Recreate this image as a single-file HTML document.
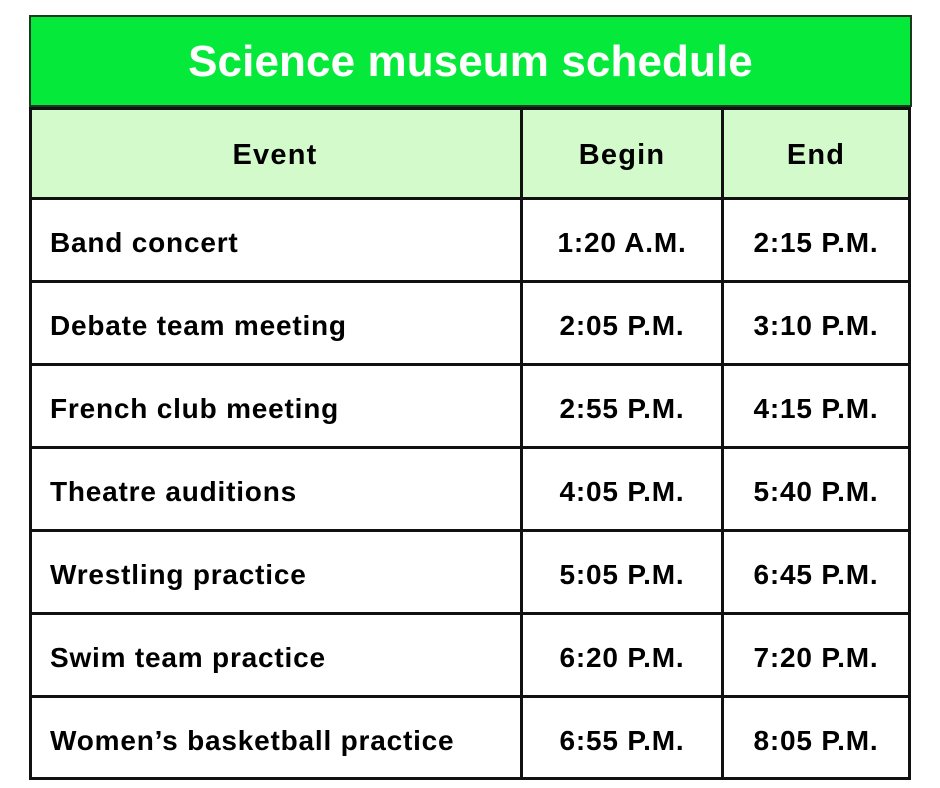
<!DOCTYPE html>
<html><head><meta charset="utf-8"><style>
body{margin:0;width:940px;height:788px;background:#fff;position:relative;overflow:hidden;font-family:"Liberation Sans",sans-serif;font-weight:bold;color:#000}
.t{position:absolute;left:29px;top:15px;width:879px;height:88px;background:#05ea3a;border:2px solid #1a3a1f;color:#fff;font-size:44px;text-align:center;line-height:90px;letter-spacing:0.1px}
.h{position:absolute;left:30px;top:109px;width:879px;height:89px;background:#d3facb}
.hl{position:absolute;background:#111;height:3px;left:29px;width:882px}
.vl{position:absolute;background:#111;width:3px;top:107px;height:673px}
.c{position:absolute;font-size:28px;line-height:83px;height:83px;letter-spacing:0.8px}
.hd{font-size:29px;letter-spacing:1.2px}
.ctr{text-align:center}
</style></head><body>
<div class="t">Science museum schedule</div>
<div class="h"></div>
<div class="hl" style="top:107px"></div>
<div class="hl" style="top:197px"></div>
<div class="hl" style="top:280px"></div>
<div class="hl" style="top:363px"></div>
<div class="hl" style="top:446px"></div>
<div class="hl" style="top:529px"></div>
<div class="hl" style="top:612px"></div>
<div class="hl" style="top:695px"></div>
<div class="hl" style="top:777px"></div>
<div class="vl" style="left:29px"></div>
<div class="vl" style="left:520px"></div>
<div class="vl" style="left:721px"></div>
<div class="vl" style="left:908px"></div>

<div class="c ctr hd" style="left:30px;width:490px;top:114px">Event</div>
<div class="c ctr hd" style="left:523px;width:198px;top:114px">Begin</div>
<div class="c ctr hd" style="left:724px;width:184px;top:114px">End</div>

<div class="c" style="left:50px;top:201px">Band concert</div>
<div class="c ctr" style="left:523px;width:198px;top:201px">1:20 A.M.</div>
<div class="c ctr" style="left:724px;width:184px;top:201px">2:15 P.M.</div>

<div class="c" style="left:50px;top:284px">Debate team meeting</div>
<div class="c ctr" style="left:523px;width:198px;top:284px">2:05 P.M.</div>
<div class="c ctr" style="left:724px;width:184px;top:284px">3:10 P.M.</div>

<div class="c" style="left:50px;top:367px">French club meeting</div>
<div class="c ctr" style="left:523px;width:198px;top:367px">2:55 P.M.</div>
<div class="c ctr" style="left:724px;width:184px;top:367px">4:15 P.M.</div>

<div class="c" style="left:50px;top:450px">Theatre auditions</div>
<div class="c ctr" style="left:523px;width:198px;top:450px">4:05 P.M.</div>
<div class="c ctr" style="left:724px;width:184px;top:450px">5:40 P.M.</div>

<div class="c" style="left:50px;top:533px">Wrestling practice</div>
<div class="c ctr" style="left:523px;width:198px;top:533px">5:05 P.M.</div>
<div class="c ctr" style="left:724px;width:184px;top:533px">6:45 P.M.</div>

<div class="c" style="left:50px;top:616px">Swim team practice</div>
<div class="c ctr" style="left:523px;width:198px;top:616px">6:20 P.M.</div>
<div class="c ctr" style="left:724px;width:184px;top:616px">7:20 P.M.</div>

<div class="c" style="left:50px;top:699px">Women’s basketball practice</div>
<div class="c ctr" style="left:523px;width:198px;top:699px">6:55 P.M.</div>
<div class="c ctr" style="left:724px;width:184px;top:699px">8:05 P.M.</div>
</body></html>
